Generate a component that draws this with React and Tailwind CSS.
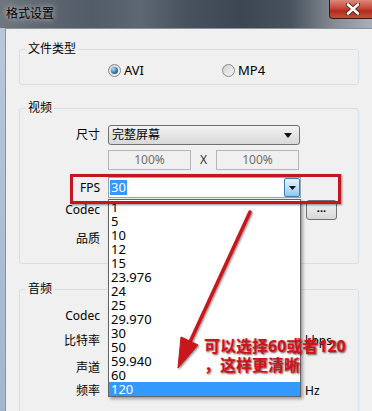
import React from "react";

const font = "font-['Noto_Sans','Noto_Sans_CJK_SC',sans-serif]";

function Label({ children }) {
  return <div className="w-[80px] text-right text-[12px] leading-[20px] text-black shrink-0">{children}</div>;
}

function Radio({ checked, label }) {
  return (
    <div className="flex items-center">
      <div className="w-[13px] h-[13px] rounded-full border border-[#8a8a8a] bg-[linear-gradient(135deg,#cfcfcf,#f7f7f7)] flex items-center justify-center">
        {checked && (
          <div className="w-[7px] h-[7px] rounded-full bg-[radial-gradient(circle_at_35%_30%,#a9dcfa,#2c6ea3_60%,#1b4d7a)]" />
        )}
      </div>
      <span className="ml-[3px] text-[13px] leading-[16px] text-black">{label}</span>
    </div>
  );
}

function Group({ title, className, children }) {
  return (
    <fieldset className={`w-[340px] border border-[#d5dfe5] rounded-[3px] ${className}`}>
      <legend className="ml-[6px] px-[2px] text-[12px] leading-[16px] text-black">{title}</legend>
      {children}
    </fieldset>
  );
}

const fpsList = ["1", "5", "10", "12", "15", "23.976", "24", "25", "29.970", "30", "50", "59.940", "60", "120"];

export default function App() {
  return (
    <div className={`relative w-[372px] h-[411px] overflow-hidden bg-[linear-gradient(180deg,#b9c9da,#a3b6cb)] flex flex-col ${font}`}>
      {/* title bar */}
      <div className="h-[28px] shrink-0 flex justify-between bg-[linear-gradient(90deg,#6f767e_0%,#5d6670_12%,#525c67_25%,#5d6771_38%,#48525e_50%,#3d4753_65%,#48525d_78%,#858c93_90%,#a8afb6_100%)]">
        <span className="pl-[6px] text-[12px] leading-[28px] text-black [text-shadow:0_0_6px_rgba(255,255,255,0.9)]">格式设置</span>
        <div className="w-[48px] h-[19px] -mr-[5px] border border-[#3b1a16] border-t-0 rounded-bl-[4px] bg-[linear-gradient(180deg,#dc8a7a_0%,#c7483a_45%,#b02b1f_60%,#c0503c_100%)] flex items-center justify-center">
          <svg width="14" height="12" viewBox="0 0 14 12">
            <path d="M2 1.5 L12 10.5 M12 1.5 L2 10.5" stroke="#3a2522" strokeWidth="4.2" strokeLinecap="round" />
            <path d="M2 1.5 L12 10.5 M12 1.5 L2 10.5" stroke="#ffffff" strokeWidth="2.6" strokeLinecap="round" />
          </svg>
        </div>
      </div>

      {/* client area */}
      <div className="flex-1 ml-[5px] bg-[#f0f0f0] border-l border-t border-[#8a949e] pl-[13px] pt-[12px]">
        <Group title="文件类型" className="pb-[6px]">
          <div className="mt-[5px] h-[16px] flex items-center pl-[88px] gap-[78px]">
            <Radio checked label="AVI" />
            <Radio label="MP4" />
          </div>
        </Group>

        <Group title="视频" className="mt-[15px] pb-[14px]">
          <div className="mt-[9px] h-[20px] flex items-center">
            <Label>尺寸</Label>
            <div className="ml-[8px] w-[192px] h-[20px] rounded-[3px] border border-[#707070] bg-[linear-gradient(180deg,#f3f3f3,#e6e6e6_50%,#d8d8d8)] flex items-center justify-between px-[3px]">
              <span className="text-[12px] leading-[18px] text-black">完整屏幕</span>
              <svg width="8" height="5" viewBox="0 0 8 5" className="mr-[4px]"><path d="M0 0 H8 L4 5 Z" fill="#111" /></svg>
            </div>
          </div>
          <div className="mt-[5px] h-[20px] flex items-center">
            <div className="w-[80px] shrink-0" />
            <div className="ml-[8px] w-[83px] h-[20px] border border-[#b5b5b5] bg-[#f0f0f0] text-center text-[12px] leading-[18px] text-[#6d6d6d]">100%</div>
            <span className="w-[25px] text-center text-[12px] text-[#333]">X</span>
            <div className="w-[83px] h-[20px] border border-[#b5b5b5] bg-[#f0f0f0] text-center text-[12px] leading-[18px] text-[#6d6d6d]">100%</div>
          </div>
          <div className="mt-[7px] h-[21px] flex items-center">
            <Label>FPS</Label>
            <div className="ml-[8px] w-[193px] h-[21px] border border-[#8fa6bd] bg-white flex items-center justify-between pl-[1px]">
              <span className="bg-[#3399ff] text-white text-[13px] leading-[15px] px-[1px]">30</span>
              <div className="w-[16px] h-[19px] border border-[#3c7fb1] rounded-[2px] bg-[linear-gradient(180deg,#e3f3fd,#bfe0f7_50%,#8cc7ee)] flex items-center justify-center">
                <svg width="7" height="4" viewBox="0 0 7 4"><path d="M0 0 H7 L3.5 4 Z" fill="#111" /></svg>
              </div>
            </div>
          </div>
          <div className="mt-[2px] h-[20px] flex items-center">
            <Label>Codec</Label>
            <div className="ml-[8px] w-[193px] shrink-0" />
            <div className="ml-[5px] w-[31px] h-[20px] rounded-[3px] border border-[#707070] bg-[linear-gradient(180deg,#f3f3f3,#e6e6e6_50%,#d8d8d8)] text-center text-[11px] leading-[14px] font-bold text-black">...</div>
          </div>
          <div className="mt-[9px] h-[20px] flex items-center">
            <Label>品质</Label>
          </div>
        </Group>

        <Group title="音频" className="mt-[17px] pb-[20px]">
          <div className="mt-[9px] h-[20px] flex items-center">
            <Label>Codec</Label>
          </div>
          <div className="mt-[5px] h-[20px] flex items-center">
            <Label>比特率</Label>
            <div className="ml-[8px] w-[192px] shrink-0" />
            <span className="ml-[5px] text-[12px] text-black">kbps</span>
          </div>
          <div className="mt-[7px] h-[20px] flex items-center">
            <Label>声道</Label>
          </div>
          <div className="mt-[3px] h-[20px] flex items-center">
            <Label>频率</Label>
            <div className="ml-[8px] w-[192px] shrink-0" />
            <span className="ml-[5px] text-[12px] text-black">Hz</span>
          </div>
        </Group>
      </div>

      {/* dropdown list */}
      <div className="absolute left-[108px] top-[199px] w-[193px] h-[198px] bg-white border border-[#646464] shadow-[2px_2px_3px_rgba(0,0,0,0.35)]">
        {fpsList.map((v) => (
          <div
            key={v}
            className={`h-[14px] pl-[2px] text-[13px] leading-[14px] ${v === "120" ? "bg-[#3399ff] text-white" : "text-black"}`}
          >
            {v}
          </div>
        ))}
      </div>

      {/* annotation: red rectangle */}
      <div className="absolute left-[70px] top-[174px] w-[271px] h-[30px] border-[3px] border-[#c4161e] shadow-[1px_1px_2px_rgba(0,0,0,0.45)] pointer-events-none" />

      {/* annotation: arrow */}
      <svg className="absolute inset-0 pointer-events-none" width="372" height="411" viewBox="0 0 372 411">
        <defs>
          <filter id="sh" x="-20%" y="-20%" width="140%" height="140%">
            <feDropShadow dx="1" dy="1" stdDeviation="1" floodColor="#000" floodOpacity="0.5" />
          </filter>
        </defs>
        <g filter="url(#sh)" fill="#c8141e" stroke="#c8141e">
          <line x1="250" y1="212" x2="190" y2="342" strokeWidth="3.5" strokeLinecap="round" />
          <polygon points="178,368 181,337 198,345" strokeWidth="1" strokeLinejoin="round" />
        </g>
      </svg>

      {/* annotation: text */}
      <div className="absolute left-[204px] top-[337px] text-[16px] leading-[19px] font-bold text-[#d0121c] [text-shadow:1px_1px_2px_rgba(70,0,0,0.75)] pointer-events-none">
        <div>可以选择60或者120</div>
        <div>，这样更清晰</div>
      </div>
    </div>
  );
}
